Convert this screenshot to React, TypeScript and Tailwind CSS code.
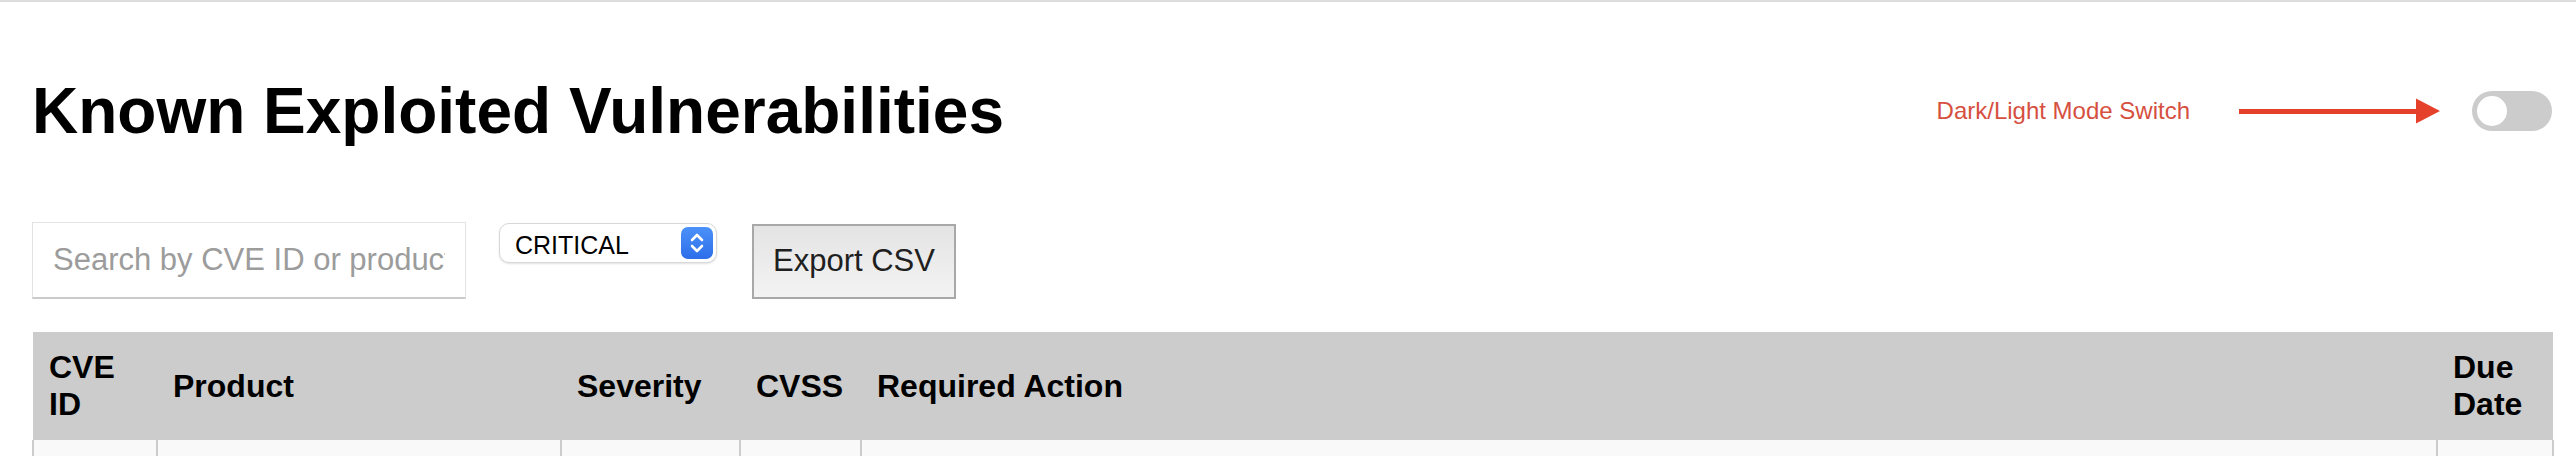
import { useState } from 'react';

const columns = [
  { label: 'CVE ID', width: 'w-[124px]' },
  { label: 'Product', width: 'w-[404px]' },
  { label: 'Severity', width: 'w-[179px]' },
  { label: 'CVSS', width: 'w-[121px]' },
  { label: 'Required Action', width: 'w-[1576px]' },
  { label: 'Due Date', width: 'w-[116px]' },
];

const SelectChevrons = () => (
  <span className="flex h-[32px] w-[32px] items-center justify-center rounded-[7px] bg-gradient-to-b from-[#4b91f9] to-[#2d6ee9]">
    <svg width="16" height="22" viewBox="0 0 16 22" fill="none">
      <path d="M3 8 L8 3 L13 8" stroke="white" strokeWidth="2.6" strokeLinecap="round" strokeLinejoin="round" />
      <path d="M3 14 L8 19 L13 14" stroke="white" strokeWidth="2.6" strokeLinecap="round" strokeLinejoin="round" />
    </svg>
  </span>
);

export default function App() {
  const [dark, setDark] = useState(false);

  return (
    <div className="min-h-screen bg-white border-t-2 border-[#dddddd] pl-[32px] pr-[24px] pt-[72px] font-['Liberation_Sans',Arial,sans-serif] text-black">
      {/* Header */}
      <div className="flex h-[74px] items-center justify-between">
        <h1 className="text-[64px] font-bold leading-[74px]">Known Exploited Vulnerabilities</h1>
        <div className="flex items-center">
          <span className="text-[24px] leading-[28px] text-[#d6503f]">Dark/Light Mode Switch</span>
          <svg className="ml-[49px]" width="201" height="26" viewBox="0 0 201 26">
            <rect x="0" y="11" width="180" height="5" fill="#e5412a" />
            <polygon points="177,0.5 201,13 177,25.5" fill="#e5412a" />
          </svg>
          <button
            onClick={() => setDark(!dark)}
            className="ml-[32px] flex h-[40px] w-[80px] items-center rounded-full bg-[#cccccc] p-[5px]"
          >
            <span className="block h-[30px] w-[30px] rounded-full bg-white" />
          </button>
        </div>
      </div>

      {/* Controls */}
      <div className="mt-[74px] flex items-start">
        <div className="flex h-[77px] w-[434px] items-center border border-[#e3e3e3] border-b-2 border-b-[#cbcbcb] bg-white px-[20px]">
          <input
            className="w-full bg-transparent text-[31px] text-black outline-none placeholder:text-[#9c9c9c]"
            placeholder="Search by CVE ID or product..."
          />
        </div>
        <div className="ml-[33px] mt-[1px] flex h-[40px] w-[218px] items-center justify-between rounded-[10px] border border-[#d8d8d8] bg-white pl-[15px] pr-[3px] shadow-[0_1px_2px_rgba(0,0,0,0.12)]">
          <span className="pt-[3px] text-[25px] leading-[28px] text-black">CRITICAL</span>
          <SelectChevrons />
        </div>
        <button className="ml-[35px] mt-[2px] flex h-[75px] w-[204px] items-center justify-center border-2 border-[#a8a8a8] bg-gradient-to-b from-[#e4e4e4] to-[#f3f3f3] text-[31px] text-[#1f1f1f]">
          Export CSV
        </button>
      </div>

      {/* Table */}
      <table className="mt-[33px] w-full table-fixed border-collapse text-[32px] leading-[37px]">
        <colgroup>
          {columns.map((c) => (
            <col key={c.label} className={c.width} />
          ))}
        </colgroup>
        <thead>
          <tr className="h-[108px] bg-[#cccccc]">
            {columns.map((c) => (
              <th key={c.label} className="p-[16px] text-left align-middle font-bold">
                {c.label}
              </th>
            ))}
          </tr>
        </thead>
        <tbody>
          <tr className="h-[80px] bg-[#f9f9f9]">
            {columns.map((c) => (
              <td key={c.label} className="border-x-2 border-b-2 border-[#cccccc] p-[16px]" />
            ))}
          </tr>
        </tbody>
      </table>
    </div>
  );
}
